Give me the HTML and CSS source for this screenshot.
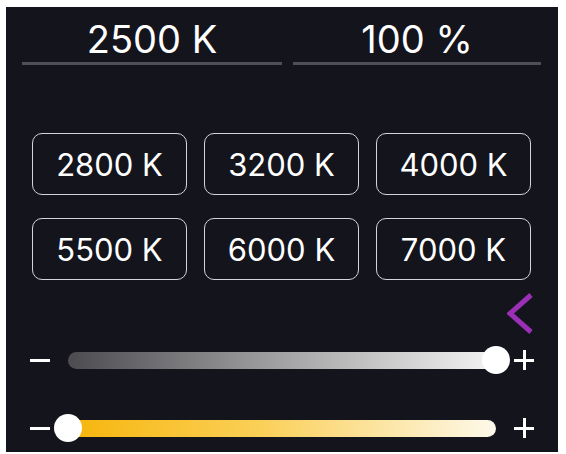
FILE: index.html
```html
<!DOCTYPE html>
<html lang="en">
<head>
    <meta charset="UTF-8">
    <meta name="viewport" content="width=device-width, initial-scale=1.0">
    <title>Lampu</title>
    <link rel="stylesheet" href="styles.css">
</head>
<body>
    <div class="panel">
        <div class="readout">
            <div class="field field-temp">2500 K</div>
            <div class="field field-level">100 %</div>
        </div>

        <div class="presets">
            <div class="preset">2800 K</div>
            <div class="preset">3200 K</div>
            <div class="preset">4000 K</div>
            <div class="preset">5500 K</div>
            <div class="preset">6000 K</div>
            <div class="preset">7000 K</div>
        </div>

        <div class="toggle-row">
            <svg class="chevron" width="28" height="42" viewBox="0 0 28 42">
                <polyline points="24,2 3,20.5 24,39" fill="none" stroke="#9b2fb6" stroke-width="5"/>
            </svg>
        </div>

        <div class="sliders">
            <div class="slider">
                <span class="minus"></span>
                <div class="track track-level">
                    <span class="knob" style="left: 100%"></span>
                </div>
                <span class="plus"></span>
            </div>
            <div class="slider">
                <span class="minus"></span>
                <div class="track track-temp">
                    <span class="knob" style="left: 0%"></span>
                </div>
                <span class="plus"></span>
            </div>
        </div>
    </div>
</body>
</html>
```

FILE: styles.css
```css
body {
    margin: 0;
    background-color: #fff;
    font-family: Inter, "Liberation Sans", sans-serif;
}
.panel {
    margin: 7px 8px 0 6px;
    height: 445px;
    background-color: #14141d;
    color: #fff;
    box-sizing: border-box;
    padding-top: 9px;
}
.readout {
    display: flex;
    gap: 11px;
    padding: 0 17px 0 16px;
}
.field {
    font-size: 38px;
    line-height: 46px;
    text-align: center;
    border-bottom: 3px solid #4f4f59;
}
.field-temp {
    width: 260px;
}
.field-level {
    flex: 1;
}
.presets {
    display: grid;
    grid-template-columns: repeat(3, 155px);
    column-gap: 17px;
    row-gap: 23px;
    margin-top: 68px;
    padding-left: 26px;
}
.preset {
    height: 62px;
    box-sizing: border-box;
    border: 1.5px solid #d4d4d9;
    border-radius: 10px;
    display: flex;
    justify-content: center;
    align-items: center;
    padding-top: 1px;
    font-size: 31px;
}
.toggle-row {
    display: flex;
    justify-content: flex-end;
    padding-right: 23px;
    margin-top: 13px;
}
.chevron {
    display: block;
}
.sliders {
    display: flex;
    flex-direction: column;
    gap: 40px;
    margin-top: 11px;
    padding-left: 24px;
}
.slider {
    display: flex;
    align-items: center;
    gap: 18px;
    height: 28px;
}
.minus {
    width: 20px;
    height: 3px;
    background-color: #fff;
}
.plus {
    position: relative;
    width: 20px;
    height: 20px;
}
.plus::before,
.plus::after {
    content: "";
    position: absolute;
    background-color: #fff;
}
.plus::before {
    left: 0;
    top: 8.5px;
    width: 20px;
    height: 3px;
}
.plus::after {
    left: 8.5px;
    top: 0;
    width: 3px;
    height: 20px;
}
.track {
    position: relative;
    width: 428px;
    height: 17px;
    border-radius: 9px;
}
.track-level {
    background: linear-gradient(to right, #4b4b50, #9a9a9c 45%, #f4f4f4);
}
.track-temp {
    background: linear-gradient(to right, #f6b50c, #fbd058 45%, #fdf9ea);
}
.knob {
    position: absolute;
    top: 50%;
    width: 28px;
    height: 28px;
    margin: -14px 0 0 -14px;
    border-radius: 50%;
    background-color: #fff;
}
```
